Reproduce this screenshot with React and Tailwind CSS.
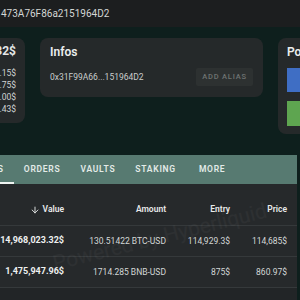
import React from "react";
import { ArrowDown } from "lucide-react";

export default function App() {
  const rows = [
    { v: "14,968,023.32$", a: "130.51422 BTC-USD", e: "114,929.3$", p: "114,685$" },
    { v: "1,475,947.96$", a: "1714.285 BNB-USD", e: "875$", p: "860.97$" },
  ];
  return (
    <div className="relative w-[300px] h-[300px] overflow-hidden bg-[#0e1f1d] font-['Roboto',sans-serif]">
      <div className="h-[27px] bg-[#1c1e1f] flex items-center pl-[1px] text-[10px] text-[#d3d6d5] whitespace-nowrap">
        473A76F86a2151964D2
      </div>

      <div className="mt-[11px] h-[98px] flex items-start gap-[15px]">
        <div className="shrink-0 w-[100px] ml-[-75px] h-[85px] rounded-lg bg-[#25292a] pr-[9px] pt-[6px] text-right text-[#e4e6e6]">
          <div className="text-[12px] font-bold leading-[14px] whitespace-nowrap">9,732$</div>
          <div className="mt-[9px] text-[8.5px] leading-[12px] text-[#cfd3d2] whitespace-nowrap">
            <div>.15$</div>
            <div>.75$</div>
            <div>.00$</div>
            <div>.43$</div>
          </div>
        </div>

        <div className="shrink-0 w-[223px] h-[59px] rounded-lg bg-[#25292a] px-[10px] pt-[6px]">
          <div className="text-[12px] font-semibold leading-[16px] text-[#eceeee]">Infos</div>
          <div className="mt-[8px] flex items-center justify-between">
            <span className="text-[8.5px] text-[#c9cdcc] whitespace-nowrap">0x31F99A66...151964D2</span>
            <span className="h-[18px] w-[57px] flex items-center justify-center rounded-[2px] bg-[#2d3131] text-[7.5px] font-medium tracking-[0.8px] text-[#6d7371] whitespace-nowrap">
              ADD ALIAS
            </span>
          </div>
        </div>

        <div className="shrink-0 w-[60px] h-[96px] rounded-lg bg-[#25292a] pl-[9px] pt-[6px]">
          <div className="text-[12px] font-semibold leading-[16px] text-[#eceeee] whitespace-nowrap">Po</div>
          <div className="mt-[8px] h-[24px] bg-[#3f6ec4]" />
          <div className="mt-[9px] h-[25px] bg-[#5ea550]" />
        </div>
      </div>

      <div className="mt-[19px] w-[297px] h-[29px] bg-[#577a71] flex items-stretch text-[8.5px] font-semibold tracking-[0.75px] text-[#e3ebe8] whitespace-nowrap">
        <div className="relative ml-[-42px] px-[10px] flex items-center">
          ASSETS
          <div className="absolute left-0 right-0 bottom-0 h-[2px] bg-[#eef3f1]" />
        </div>
        <div className="px-[10px] flex items-center">ORDERS</div>
        <div className="px-[10px] flex items-center">VAULTS</div>
        <div className="px-[10px] flex items-center">STAKING</div>
        <div className="pl-[13px] pr-[10px] flex items-center">MORE</div>
      </div>

      <div className="w-[297px] h-[116px] bg-[#222527]">
        <div className="bg-[#26292b]">
          <div className="h-[42px] pt-[10px] flex items-center border-b border-[#35393b] text-[8.5px] font-semibold text-[#e8eaea]">
            <div className="w-[64px] flex items-center justify-end gap-[3px]">
              <ArrowDown size={10} strokeWidth={2.2} />
              <span>Value</span>
            </div>
            <div className="w-[102px] text-right">Amount</div>
            <div className="w-[64px] text-right">Entry</div>
            <div className="w-[57px] text-right">Price</div>
          </div>
          {rows.map((r, i) => (
            <div key={i} className="h-[31px] flex items-center border-b border-[#35393b] text-[8.5px] text-[#d3d7d6] whitespace-nowrap">
              <div className="w-[64px] text-right text-[9px] font-bold text-[#eef0f0]">{r.v}</div>
              <div className="w-[102px] text-right">{r.a}</div>
              <div className="w-[64px] text-right">{r.e}</div>
              <div className="w-[57px] text-right">{r.p}</div>
            </div>
          ))}
        </div>
      </div>

      <div className="absolute left-[40px] top-[222px] w-[240px] text-center text-[21px] text-white/[0.035] whitespace-nowrap -rotate-[14deg] pointer-events-none">
        Powered by Hyperliquid
      </div>
    </div>
  );
}
